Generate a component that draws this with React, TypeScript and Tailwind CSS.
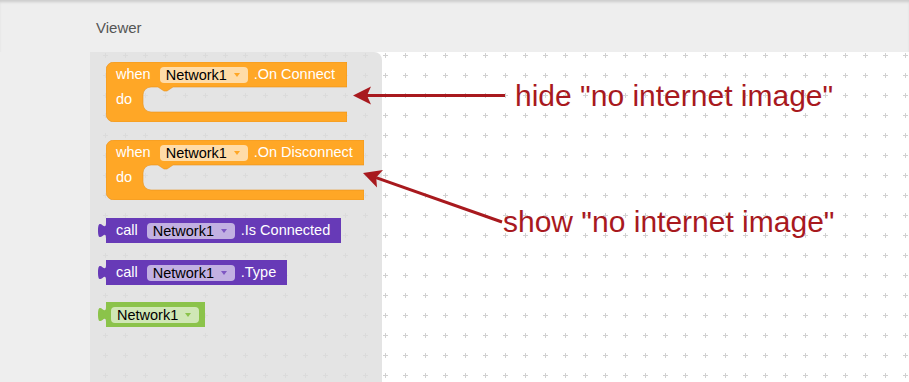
import React from "react";

const FONT = { fontFamily: '"Liberation Sans", Arial, sans-serif' };

function Arrow({ color }: { color: string }) {
  return (
    <svg width="6" height="4" viewBox="0 0 6 4" className="block">
      <polygon points="0,0 6,0 3,4" fill={color} />
    </svg>
  );
}

function Pill({ arrow }: { arrow: string }) {
  return (
    <div className="flex items-center w-[88px] h-[16px] rounded-[4px] bg-white/60 pl-[6px] pr-[8px] text-black">
      <span className="leading-[16px]">Network1</span>
      <span className="ml-auto">
        <Arrow color={arrow} />
      </span>
    </div>
  );
}

function EventBlock({ width, label }: { width: number; label: string }) {
  const W = width;
  const d = `M0,8 A8,8 0 0,1 8,0 H${W} V25 H67 l-6,4 -3,0 -6,-4 H45 a8,8 0 0,0 -8,8 V42 a8,8 0 0,0 8,8 H${W} V60 H8 a8,8 0 0,1 -8,-8 Z`;
  return (
    <div className="relative h-[60px]" style={{ width: W }}>
      <svg className="absolute left-0 top-0" width={W} height={60} viewBox={`0 0 ${W} 60`}>
        <path d={d} fill="#ffa726" stroke="#e8921c" strokeWidth="0.6" />
      </svg>
      <div className="relative flex flex-col text-white text-[14.5px]">
        <div className="flex items-center h-[25px] pl-[10px]">
          <span>when</span>
          <span className="ml-[9px]">
            <Pill arrow="#ffa726" />
          </span>
          <span className="ml-[6px]">{label}</span>
        </div>
        <div className="flex items-center h-[25px] pl-[10px]">
          <span>do</span>
        </div>
      </div>
    </div>
  );
}

function ValueShape({ width, fill }: { width: number; fill: string }) {
  const W = width;
  const d = `M8,0 V5 c0,10 -8,-8 -8,7.5 s8,-2.5 8,7.5 V25 H${W + 8} V0 Z`;
  return (
    <svg className="absolute left-[-8px] top-0" width={W + 8} height={25} viewBox={`0 0 ${W + 8} 25`}>
      <path d={d} fill={fill} />
    </svg>
  );
}

function CallBlock({ width, label }: { width: number; label: string }) {
  return (
    <div className="relative h-[25px]" style={{ width }}>
      <ValueShape width={width} fill="#673ab7" />
      <div className="relative flex items-center h-[25px] pl-[10px] text-white text-[14.5px]">
        <span>call</span>
        <span className="ml-[9px]">
          <Pill arrow="#7e57c2" />
        </span>
        <span className="ml-[6px]">{label}</span>
      </div>
    </div>
  );
}

function ComponentBlock() {
  return (
    <div className="relative h-[25px] w-[99px]">
      <ValueShape width={99} fill="#8bc34a" />
      <div className="relative flex items-center h-[25px] pl-[5px] text-[14.5px]">
        <Pill arrow="#8bc34a" />
      </div>
    </div>
  );
}

export default function App() {
  return (
    <div className="w-[909px] h-[382px] bg-[#eeeeee] flex flex-col overflow-hidden" style={FONT}>
      <div className="h-[52px] pl-[96px] pt-[16px] shadow-[inset_0_3px_3px_-1px_rgba(0,0,0,0.15)]">
        <span className="text-[15px] leading-[18px] text-[#555555]">Viewer</span>
      </div>
      <div className="flex flex-1">
        <div className="w-[90px]" />
        <div className="relative flex-1 bg-white overflow-hidden">
          <svg className="absolute inset-0 w-full h-full">
            <defs>
              <pattern id="grid" x="5" y="-7" width="20" height="20" patternUnits="userSpaceOnUse">
                <path d="M8,10.5 H13 M10.5,8 V13" stroke="#d0d0d0" strokeWidth="1" />
              </pattern>
            </defs>
            <rect width="100%" height="100%" fill="url(#grid)" />
          </svg>
          <div className="relative flex h-full">
            <div className="w-[292px] h-full bg-[#dddddd]/80 rounded-tr-[8px] pt-[10px] pl-[16px] flex flex-col">
              <EventBlock width={241} label=".On Connect" />
              <div className="mt-[18px]">
                <EventBlock width={258} label=".On Disconnect" />
              </div>
              <div className="mt-[18px]">
                <CallBlock width={235} label=".Is Connected" />
              </div>
              <div className="mt-[17px]">
                <CallBlock width={181} label=".Type" />
              </div>
              <div className="mt-[17px]">
                <ComponentBlock />
              </div>
            </div>
          </div>
          <svg className="absolute inset-0 w-full h-full pointer-events-none">
            <line x1="277" y1="43.5" x2="415" y2="43.5" stroke="#a8191e" strokeWidth="3" />
            <polygon points="263,43.5 281,34.5 277,43.5 281,52.5" fill="#a8191e" />
            <line x1="286" y1="125.6" x2="412" y2="170" stroke="#a8191e" strokeWidth="3" />
            <polygon points="273,121 293,118 286.2,125.6 287,135.5" fill="#a8191e" />
          </svg>
          <div className="absolute left-[425px] top-[28.6px] text-[30px] leading-[30px] text-[#a8191e] whitespace-nowrap">
            hide "no internet image"
          </div>
          <div className="absolute left-[413px] top-[154.6px] text-[30px] leading-[30px] text-[#a8191e] whitespace-nowrap">
            show "no internet image"
          </div>
        </div>
      </div>
    </div>
  );
}
